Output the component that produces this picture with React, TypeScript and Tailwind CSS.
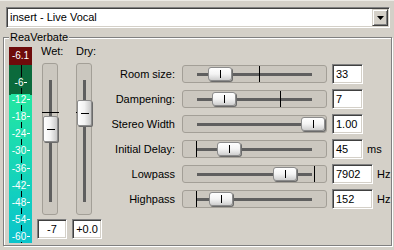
import React from 'react';

const sunken =
  'border border-t-[#808080] border-l-[#808080] border-b-white border-r-white shadow-[inset_1px_1px_0_#404040,inset_-1px_-1px_0_#d4d0c8]';

type Param = {
  label: string;
  value: string;
  unit?: string;
  thumb: number;
  marker?: number;
  wide?: boolean;
};

const params: Param[] = [
  { label: 'Room size:', value: '33', thumb: 38, marker: 77 },
  { label: 'Dampening:', value: '7', thumb: 42, marker: 98 },
  { label: 'Stereo Width', value: '1.00', thumb: 131 },
  { label: 'Initial Delay:', value: '45', unit: 'ms', thumb: 47, marker: 14 },
  { label: 'Lowpass', value: '7902', unit: 'Hz', thumb: 103, marker: 132, wide: true },
  { label: 'Highpass', value: '152', unit: 'Hz', thumb: 39, marker: 14, wide: true },
];

const ticks = [-6, -12, -18, -24, -30, -36, -42, -48, -54, -60];

// meter colour behind a tick label (y relative to meter top)
function meterColor(y: number) {
  if (y < 46) return '#0b6a3c';
  const t = Math.min(1, Math.max(0, (y - 48) / 148));
  const a = [0x24, 0xe6, 0xa2];
  const b = [0x0b, 0xc4, 0xcc];
  const c = a.map((v, i) => Math.round(v + (b[i] - v) * t));
  return `rgb(${c[0]},${c[1]},${c[2]})`;
}

function Meter() {
  return (
    <div className="relative w-[23px] h-[196px] flex flex-col">
      <div className="h-[18px] bg-[#6e0b0b] text-white text-[10px] leading-none flex items-center justify-center">
        -6.1
      </div>
      <div className="h-[30px] bg-[#0b6a3c]" />
      <div className="flex-1 bg-gradient-to-b from-[#24e6a2] to-[#0bc4cc]" />
      <div className="absolute left-[12px] top-[18px] bottom-0 w-px bg-black" />
      {ticks.map((t, i) => {
        const y = 35 + i * 17.2;
        return (
          <div
            key={t}
            className="absolute left-0 right-0 h-[11px] flex justify-center"
            style={{ top: y - 5.5 }}
          >
            <span
              className="flex items-center text-[10px] leading-[11px] text-white pl-px"
              style={{ background: meterColor(y) }}
            >
              {t}
              <span className="w-[3px] h-px bg-white ml-px" />
            </span>
          </div>
        );
      })}
    </div>
  );
}

function Fader({ label, value, thumb, offset }: { label: string; value: string; thumb: number; offset: string }) {
  return (
    <div className="w-[30px] flex flex-col">
      <div className="mt-px h-[13px] leading-[13px] pl-[4px]">{label}</div>
      <div
        className={`relative mt-[5px] ${offset} w-[16px] h-[152px] rounded-[3px] border border-[#a39f97] bg-[#cbc7bf]`}
      >
        <div className="absolute left-[6px] top-[16px] w-[3px] h-[122px] bg-[#5f5f5f]" />
        <div className="absolute -left-px -right-[2px] top-[48px] h-px bg-black" />
        <div
          className="absolute left-0 w-[15px] h-[26px] rounded-[2px] border border-[#8c8c8c] bg-gradient-to-r from-white via-[#f2f2f2] to-[#c9c9c9] shadow-[1px_1px_0_#6b6b6b] flex items-center justify-center"
          style={{ top: thumb }}
        >
          <div className="w-[8px] h-px bg-black" />
        </div>
      </div>
      <div className={`mt-[4px] w-[30px] h-[20px] bg-white flex items-center justify-center ${sunken}`}>
        {value}
      </div>
    </div>
  );
}

function ParamRow({ p }: { p: Param }) {
  return (
    <div className="flex items-center h-[20px]">
      <div className="w-[73px] text-right whitespace-nowrap">{p.label}</div>
      <div className="relative ml-[7px] w-[145px] h-[18px] rounded-[3px] border border-[#a39f97] bg-[#cbc7bf]">
        <div className="absolute left-[14px] w-[115px] top-[7px] h-[3px] bg-[#5f5f5f]" />
        {p.marker !== undefined && (
          <div className="absolute top-0 bottom-0 w-px bg-black" style={{ left: p.marker - 1 }} />
        )}
        <div
          className="absolute top-[1px] w-[24px] h-[14px] rounded-[3px] border border-[#8c8c8c] bg-gradient-to-b from-white via-[#f4f4f4] to-[#cfcfcf] shadow-[1px_1px_0_#6b6b6b] flex items-center justify-center"
          style={{ left: p.thumb - 13 }}
        >
          <div className="w-px h-[8px] bg-black" />
        </div>
      </div>
      <div
        className={`ml-[5px] h-[20px] ${p.wide ? 'w-[41px]' : 'w-[31px]'} bg-white flex items-center pl-[3px] ${sunken}`}
      >
        {p.value}
      </div>
      {p.unit && <div className="ml-[4px]">{p.unit}</div>}
    </div>
  );
}

export default function App() {
  return (
    <div className="w-[394px] h-[250px] overflow-hidden bg-[#d4d0c8] border-t border-[#eceae5] font-['Liberation_Sans',sans-serif] text-[11px] text-black">
      {/* FX chain selector */}
      <div className={`ml-[6px] mt-[6px] w-[384px] h-[21px] bg-white flex items-center ${sunken}`}>
        <span className="flex-1 pl-[3px]">insert - Live Vocal</span>
        <div className="mr-px w-[16px] h-[17px] bg-[#d4d0c8] border border-t-[#d4d0c8] border-l-[#d4d0c8] border-b-[#404040] border-r-[#404040] shadow-[inset_1px_1px_0_white,inset_-1px_-1px_0_#808080] flex items-center justify-center">
          <svg width="7" height="4" viewBox="0 0 7 4">
            <path d="M0 0h7L3.5 4z" fill="#000" />
          </svg>
        </div>
      </div>

      <fieldset className="ml-[3px] mt-[2px] w-[389px] h-[216px] border border-[#808080] shadow-[1px_1px_0_white,inset_1px_1px_0_white]">
        <legend className="ml-[5px] px-px leading-[14px] bg-[#d4d0c8]">ReaVerbate</legend>
        <div className="flex items-start">
          <div className="ml-[5px] mt-[3px]">
            <Meter />
          </div>
          <div className="ml-[5px] flex gap-[5px]">
            <Fader label="Wet:" value="-7" thumb={52} offset="ml-[5px]" />
            <Fader label="Dry:" value="+0.0" thumb={36} offset="ml-[4px]" />
          </div>
          <div className="mt-[20px] flex flex-col gap-[5px]">
            {params.map((p) => (
              <ParamRow key={p.label} p={p} />
            ))}
          </div>
        </div>
      </fieldset>
    </div>
  );
}
